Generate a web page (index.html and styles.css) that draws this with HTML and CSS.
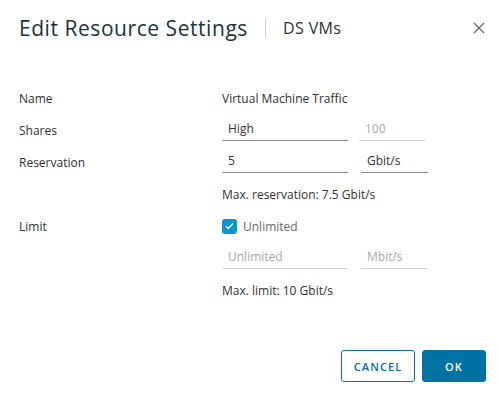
FILE: index.html
```html
<!DOCTYPE html>
<html>
<head>
<meta charset="utf-8">
<link rel="stylesheet" href="styles.css">
</head>
<body>
<div class="dialog">
  <div class="header">
    <h1 class="title">Edit Resource Settings</h1>
    <span class="sep"></span>
    <span class="subtitle">DS VMs</span>
    <button class="close" aria-label="Close">
      <svg width="12" height="12" viewBox="0 0 12 12"><path d="M1 1 L11 11 M11 1 L1 11" stroke="#6a6a6a" stroke-width="1.3" fill="none"/></svg>
    </button>
  </div>
  <div class="form">
    <div class="row"><div class="label">Name</div><div class="value"><span class="text">Virtual Machine Traffic</span></div></div>
    <div class="row"><div class="label">Shares</div><div class="value">
      <div class="input main">High</div>
      <div class="input unit disabled gap-s">100</div>
    </div></div>
    <div class="row"><div class="label">Reservation</div><div class="value">
      <div class="input main">5</div>
      <div class="input unit">Gbit/s</div>
    </div></div>
    <div class="row"><div class="label"></div><div class="value"><span class="text">Max. reservation: 7.5 Gbit/s</span></div></div>
    <div class="row"><div class="label">Limit</div><div class="value">
      <span class="checkbox"><svg width="9" height="8" viewBox="0 0 9 8"><path d="M1 4.2 L3.4 6.4 L8 1.4" stroke="#fff" stroke-width="1.4" fill="none"/></svg></span>
      <span class="check-label">Unlimited</span>
    </div></div>
    <div class="row"><div class="label"></div><div class="value">
      <div class="input main disabled">Unlimited</div>
      <div class="input unit disabled">Mbit/s</div>
    </div></div>
    <div class="row"><div class="label"></div><div class="value"><span class="text">Max. limit: 10 Gbit/s</span></div></div>
  </div>
  <div class="footer">
    <button class="btn btn-outline">CANCEL</button>
    <button class="btn btn-primary">OK</button>
  </div>
</div>
</body>
</html>
```
FILE: styles.css
```css
* { box-sizing: border-box; }
html, body { margin: 0; padding: 0; background: #fff; }
body { font-family: "Open Sans", "Noto Sans", sans-serif; color: #313131; }
.dialog { width: 498px; height: 393px; padding: 0 12px 0 19px; display: flex; flex-direction: column; }
.header { display: flex; align-items: center; height: 56px; padding-top: 0; }
.title { margin: 0; font-weight: 400; font-size: 21px; color: #21333b; letter-spacing: 0.55px; }
.sep { width: 1px; height: 20px; background: #cfcfcf; margin: 0 17px 0 17px; }
.subtitle { font-size: 16px; color: #313131; letter-spacing: 0.4px; }
.close { margin-left: auto; background: none; border: 0; padding: 0; width: 14px; height: 14px; display: flex; align-items: center; justify-content: center; }
.form { margin-top: 26px; display: flex; flex-direction: column; }
.row { display: flex; align-items: center; height: 32px; font-size: 12px; }
.label { width: 203px; color: #313131; }
.value { display: flex; align-items: center; }
.text { color: #313131; }
.input { height: 23px; border-bottom: 1px solid #8c8c8c; padding: 0 6px; display: flex; align-items: center; color: #313131; margin-top: -2px; }
.input.main { width: 126px; }
.input.unit { width: 67px; margin-left: 13px; }
.input.unit.gap-s { margin-left: 11px; }
.input.disabled { border-bottom-color: #d8d8d8; color: #a8a8a8; }
.checkbox { width: 15px; height: 15px; border-radius: 3px; background: #0a95d0; display: flex; align-items: center; justify-content: center; }
.check-label { margin-left: 6px; color: #666; }
.footer { margin-top: auto; margin-bottom: 11px; display: flex; justify-content: flex-end; gap: 7px; }
.btn { height: 32px; border-radius: 3px; font-family: inherit; font-size: 11px; font-weight: 600; letter-spacing: 1.1px; padding: 0; cursor: pointer; }
.btn-outline { width: 74px; background: #fff; border: 1px solid #0072a3; color: #0072a3; }
.btn-primary { width: 64px; background: #0072a3; border: 1px solid #0072a3; color: #fff; }
```
